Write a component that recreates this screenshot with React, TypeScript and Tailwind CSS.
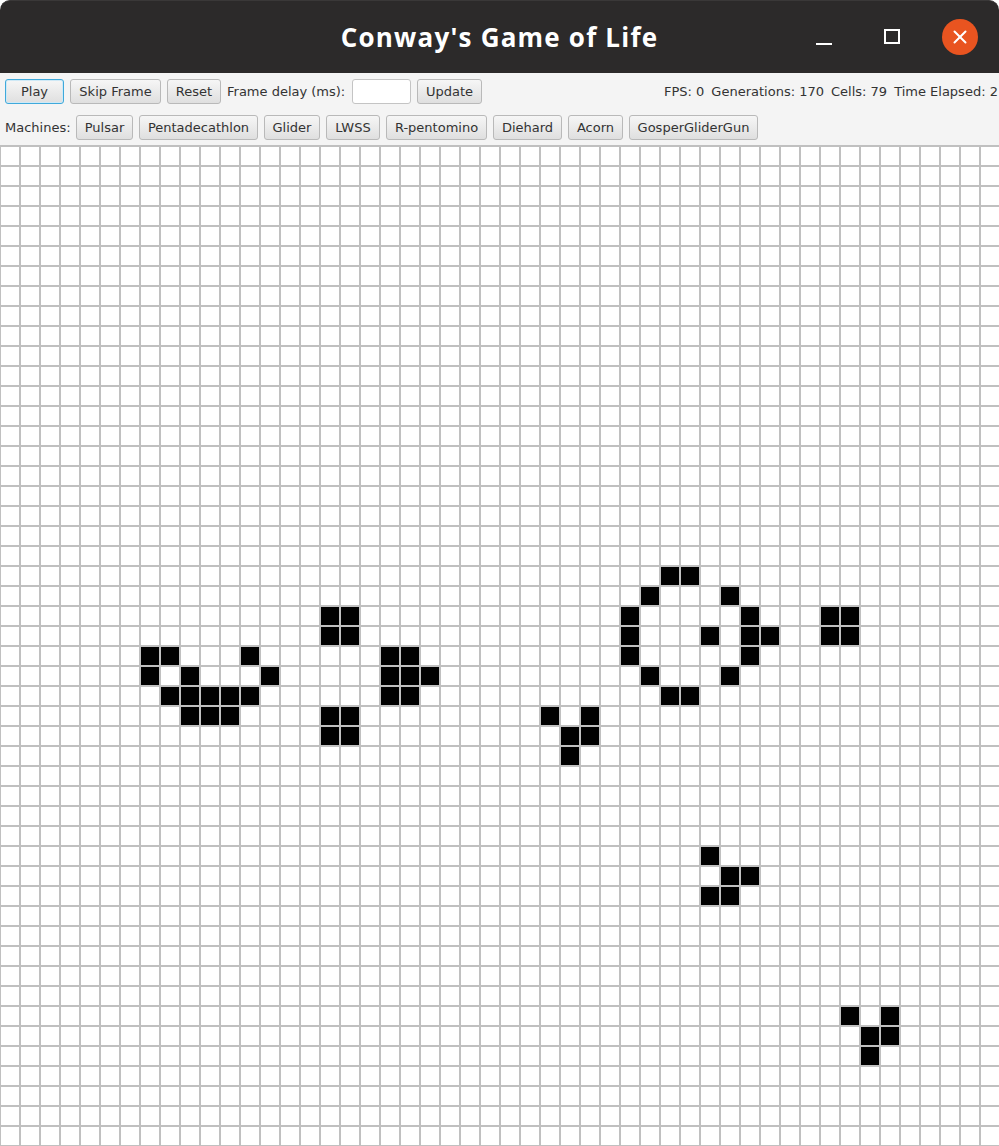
import { X } from "lucide-react";

const COLS = 50;
const ROWS = 50;

// live cells as [column, row]
const LIVE: [number, number][] = [
  [7, 25], [8, 25], [12, 25],
  [7, 26], [9, 26], [13, 26],
  [8, 27], [9, 27], [10, 27], [11, 27], [12, 27],
  [9, 28], [10, 28], [11, 28],
  [16, 23], [17, 23], [16, 24], [17, 24],
  [16, 28], [17, 28], [16, 29], [17, 29],
  [19, 25], [20, 25], [19, 26], [20, 26], [21, 26], [19, 27], [20, 27],
  [33, 21], [34, 21], [32, 22], [36, 22], [31, 23], [37, 23],
  [31, 24], [35, 24], [37, 24], [38, 24], [31, 25], [37, 25],
  [32, 26], [36, 26], [33, 27], [34, 27],
  [41, 23], [42, 23], [41, 24], [42, 24],
  [27, 28], [29, 28], [28, 29], [29, 29], [28, 30],
  [35, 35], [36, 36], [37, 36], [35, 37], [36, 37],
  [42, 43], [44, 43], [43, 44], [44, 44], [43, 45],
];

const liveSet = new Set(LIVE.map(([c, r]) => `${c},${r}`));

const machines: { name: string; w: string }[] = [
  { name: "Pulsar", w: "w-[57px]" },
  { name: "Pentadecathlon", w: "w-[119px]" },
  { name: "Glider", w: "w-[56px]" },
  { name: "LWSS", w: "w-[54px]" },
  { name: "R-pentomino", w: "w-[101px]" },
  { name: "Diehard", w: "w-[69px]" },
  { name: "Acorn", w: "w-[55px]" },
  { name: "GosperGliderGun", w: "w-[129px]" },
];

const btn =
  "h-[25px] shrink-0 rounded-[3px] border bg-gradient-to-b from-[#f6f6f6] to-[#dfdfdf] text-[13px] text-[#333] flex items-center justify-center";

const TitleBar = () => (
  <div className="relative h-[73px] bg-[#2c2a2a] rounded-t-[10px] border-t border-[#3a3838] flex items-center justify-center">
    <span className="text-white font-bold text-[26px] font-['Open_Sans',sans-serif] tracking-[1.2px]">
      Conway's Game of Life
    </span>
    <div className="absolute right-0 top-0 h-full flex items-center">
      <div className="w-[16px] h-[2px] bg-white mr-[52px] mt-[14px]" />
      <div className="w-[16px] h-[15px] border-2 border-white mr-[42px] mb-[1px]" />
      <div className="w-[36px] h-[36px] rounded-full bg-[#e95420] flex items-center justify-center mr-[21px]">
        <X className="w-[22px] h-[22px] text-white" strokeWidth={2.2} />
      </div>
    </div>
  </div>
);

const Toolbar = () => (
  <div className="bg-[#f4f4f4] pt-[6px] pb-[5px] pl-[5px] flex flex-col gap-[11px] font-['DejaVu_Sans',sans-serif] text-[13px] text-[#333]">
    <div className="flex items-center gap-[6px] whitespace-nowrap overflow-hidden">
      <button className={`${btn} w-[59px] border-[#3fa9db] shadow-[inset_0_0_0_1px_#cfe9f6]`}>Play</button>
      <button className={`${btn} w-[91px] border-[#b9b9b9]`}>Skip Frame</button>
      <button className={`${btn} w-[54px] border-[#b9b9b9]`}>Reset</button>
      <span className="w-[119px] shrink-0">Frame delay (ms):</span>
      <input
        type="text"
        className="w-[59px] h-[25px] shrink-0 rounded-[3px] border border-[#c4c4c4] bg-white outline-none"
      />
      <button className={`${btn} w-[65px] border-[#b9b9b9]`}>Update</button>
      <div className="ml-[176px] shrink-0 flex gap-[7px]">
        <span>FPS: 0</span>
        <span>Generations: 170</span>
        <span>Cells: 79</span>
        <span>Time Elapsed: 2</span>
      </div>
    </div>
    <div className="flex items-center gap-[6px] whitespace-nowrap">
      <span className="w-[65px] shrink-0">Machines:</span>
      {machines.map((m) => (
        <button key={m.name} className={`${btn} ${m.w} border-[#b9b9b9]`}>
          {m.name}
        </button>
      ))}
    </div>
  </div>
);

const Board = () => {
  const cells = [];
  for (let r = 0; r < ROWS; r++) {
    for (let c = 0; c < COLS; c++) {
      const alive = liveSet.has(`${c},${r}`);
      cells.push(
        <div key={`${c}-${r}`} className={alive ? "bg-black" : "bg-white"} />
      );
    }
  }
  return (
    <div className="h-[1001px] overflow-hidden bg-[#c0c0c0] pl-[1px] pt-[2px]">
      <div className="grid grid-cols-[repeat(50,18px)] auto-rows-[18px] gap-[2px]">
        {cells}
      </div>
    </div>
  );
};

export default function App() {
  return (
    <div className="w-[999px] h-[1146px] overflow-hidden bg-white">
      <TitleBar />
      <Toolbar />
      <Board />
    </div>
  );
}
